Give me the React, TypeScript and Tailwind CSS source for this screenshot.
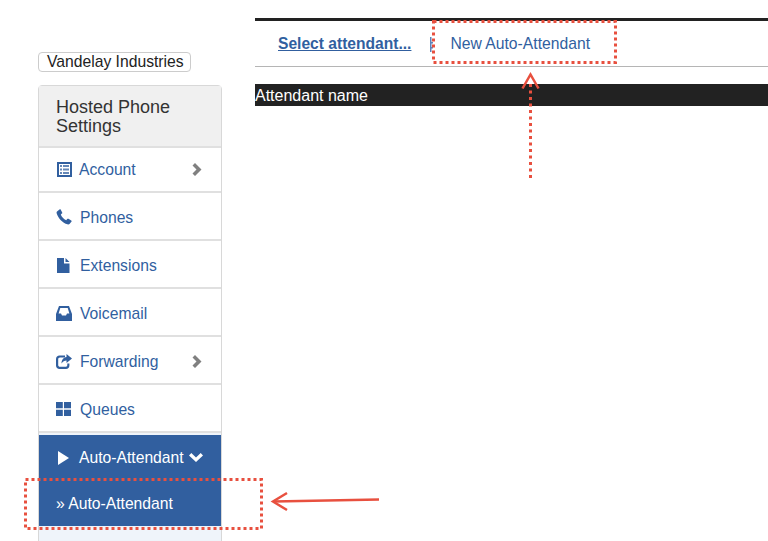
import { ReactNode } from "react";

type MenuRowProps = {
    icon: ReactNode;
    label: string;
    rowClass: string;
    labelClass: string;
    hasChevron?: boolean;
};

const ListIcon = (
    <svg width="15" height="15" viewBox="0 0 15 15" className="ml-[1px]">
        <path fill="currentColor" fillRule="evenodd" d="M0 0H15V15H0ZM2 2V13H13V2Z" />
        <path fill="currentColor" opacity="0.75" d="M3 3H5V5H3ZM6 3H12V5H6ZM3 6.5H5V8.500H3ZM6 6.500H12V8.500H6ZM3 10H5V12H3ZM6 10H12V12H6Z" />
    </svg>
);

const PhoneIcon = (
    <svg width="16" height="16" viewBox="0 0 16 16">
        <path fill="currentColor" d="M1 2.500L3.500 0.500C4 0.200 4.500 0.300 4.800 0.800L6.200 3.400C6.500 3.900 6.300 4.300 5.900 4.600L4.800 5.500C5.500 7.800 7.800 10.300 10.200 11.200L11.200 10C11.600 9.600 12 9.500 12.500 9.800L15.200 11.500C15.700 11.800 15.800 12.300 15.400 12.800L13.500 15C13 15.500 12.300 15.600 11.500 15.300C6.500 13.600 2.300 9.300 0.700 4.400C0.400 3.600 0.500 3 1 2.500Z" />
    </svg>
);

const FileIcon = (
    <svg width="13" height="15" viewBox="0 0 13 15" className="ml-[1px]">
        <path fill="currentColor" d="M0 0H7V5.500H12.500V15H0ZM8.500 0L12.500 4H8.500Z" />
    </svg>
);

const InboxIcon = (
    <svg width="16" height="15" viewBox="0 0 16 15">
        <path fill="currentColor" fillRule="evenodd" d="M3 0H13L16 8V15H0V8ZM4.300 2L2.600 7.500H5L6 9.500H10L11 7.500H13.400L11.700 2Z" />
    </svg>
);

const ShareIcon = (
    <svg width="16" height="15" viewBox="0 0 16 15">
        <path fill="currentColor" d="M3.500 1.500H9V3.500H4C2.900 3.500 2.200 4.200 2.200 5.300V11C2.200 12.100 2.900 12.800 4 12.800H9.500C10.600 12.800 11.300 12.100 11.300 11V9.500H13.400V11.500C13.400 13.500 12 15 10 15H3.500C1.500 15 0 13.500 0 11.500V5C0 3 1.500 1.500 3.500 1.500Z" />
        <path fill="currentColor" d="M10.500 0L16 4.500L10.500 9V6.500C8.500 6.500 6.800 7.500 5.500 9.500C5.500 6 7.500 3.300 10.500 3Z" />
    </svg>
);

const GridIcon = (
    <svg width="15" height="14" viewBox="0 0 15 14">
        <path fill="currentColor" d="M0 0H6.800V6.300H0ZM8 0H15V6.300H8ZM0 7.700H6.800V14H0ZM8 7.700H15V14H8Z" />
    </svg>
);

function MenuRow({ icon, label, rowClass, labelClass, hasChevron }: MenuRowProps) {
    return (
        <div className={`${rowClass} shrink-0 flex items-center border-b-2 border-[#e0e0e0] text-[#315f9f]`}>
            <span className="w-[41px] pl-[17px] flex items-center shrink-0">{icon}</span>
            <span className={labelClass}>{label}</span>
            {hasChevron && (
                <svg width="11" height="13" viewBox="0 0 11 13" className="ml-auto mr-[18px] text-[#808080]">
                    <path fill="currentColor" d="M0.500 2.500L3 0L9.500 6.500L3 13L0.500 10.500L4.500 6.500Z" />
                </svg>
            )}
        </div>
    );
}

function Sidebar() {
    return (
        <div className="w-[255px] shrink-0 pl-[38px] pt-[52px]">
            <div className="w-[153px] h-[20px] flex items-center pl-2 bg-white border border-[#cccccc] rounded text-[15.7px] leading-none text-[#222222]">
                Vandelay Industries
            </div>
            <div className="w-[184px] h-[600px] mt-[13px] border border-[#d8d8d8] rounded-t bg-[#eff4fa] flex flex-col">
                <div className="h-[62px] shrink-0 bg-[#f0f0f0] border-b-2 border-[#e0e0e0] pl-[17px] pt-[12px] text-[18px] leading-[19px] text-[#333333]">
                    Hosted Phone
                    <br />
                    Settings
                </div>
                <div className="bg-white">
                    <MenuRow icon={ListIcon} label="Account" rowClass="h-[45px]" labelClass="-ml-[1px]" hasChevron />
                    <MenuRow icon={PhoneIcon} label="Phones" rowClass="h-12 pt-[2px]" labelClass="mt-[2px]" />
                    <MenuRow icon={FileIcon} label="Extensions" rowClass="h-12 pt-[2px]" labelClass="mt-[2px]" />
                    <MenuRow icon={InboxIcon} label="Voicemail" rowClass="h-12 pt-[2px]" labelClass="mt-[2px]" />
                    <MenuRow icon={ShareIcon} label="Forwarding" rowClass="h-12 pt-[2px]" labelClass="mt-[2px]" hasChevron />
                    <MenuRow icon={GridIcon} label="Queues" rowClass="h-12 pt-[2px]" labelClass="mt-[2px]" />
                </div>
                <div className="mt-[2px] h-[91px] shrink-0 bg-[#315f9f] text-white">
                    <div className="h-[46px] flex items-center">
                        <svg width="11" height="14" viewBox="0 0 11 14" className="ml-[19px]">
                            <path fill="currentColor" d="M0 0L11 7L0 14Z" />
                        </svg>
                        <span className="ml-[10px]">Auto-Attendant</span>
                        <svg width="14" height="9" viewBox="0 0 14 9" className="ml-[5px] -mt-[2px]">
                            <path fill="currentColor" d="M0 2.500L2.300 0L7 4.500L11.700 0L14 2.500L7 9Z" />
                        </svg>
                    </div>
                    <div className="h-[45px] flex items-center pl-[17px]">» Auto-Attendant</div>
                </div>
            </div>
        </div>
    );
}

function MainPanel() {
    return (
        <div className="flex-1 pt-[18px]">
            <div className="h-[3px] bg-[#222222]" />
            <div className="h-[46px] flex items-center border-b border-[#b5b5b5] text-[#315f9f]">
                <span className="ml-[23px] font-bold underline text-[15.6px]">Select attendant...</span>
                <svg width="3" height="15" viewBox="0 0 3 15" className="ml-[19px] mt-[2px] text-[#5f82b8]">
                    <path fill="currentColor" d="M0 0H1.500V15H0ZM1.500 5H3V6.500H1.500ZM1.500 10H3V11.500H1.500Z" />
                </svg>
                <span className="ml-[17px]">New Auto-Attendant</span>
            </div>
            <div className="mt-[17px] h-[22px] bg-[#222222] text-white text-[16px] pt-[1px] leading-[22px]">Attendant name</div>
        </div>
    );
}

function Annotations() {
    return (
        <svg className="absolute inset-0" width="768" height="541" fill="none" stroke="#e8503f">
            <rect x="433.500" y="21.500" width="182" height="41" strokeWidth="3" strokeDasharray="3 3" />
            <rect x="25.500" y="479.500" width="236" height="49" strokeWidth="3" strokeDasharray="3 3" />
            <path d="M530.500 84V178" strokeWidth="3" strokeDasharray="3 3.500" />
            <path d="M522.500 88.500L530.500 74.500L538.500 88.500" strokeWidth="2.500" />
            <path d="M379 499.500L274 501.500" strokeWidth="2.500" />
            <path d="M287 493L273 501.500L287 510" strokeWidth="2.500" />
        </svg>
    );
}

export default function App() {
    return (
        <div className="relative w-[768px] h-[541px] overflow-hidden bg-white flex font-['Liberation_Sans',Arial,sans-serif] text-[15.7px]">
            <Sidebar />
            <MainPanel />
            <Annotations />
        </div>
    );
}
